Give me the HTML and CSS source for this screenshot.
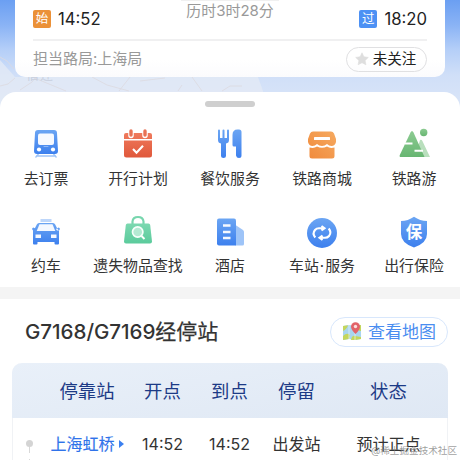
FILE: index.html
```html
<!DOCTYPE html>
<html lang="zh-CN">
<head>
<meta charset="utf-8">
<title>G7168/G7169</title>
<link rel="stylesheet" href="styles.css">
</head>
<body>
<svg class="defs" width="0" height="0" aria-hidden="true">
  <defs>
    <linearGradient id="blue" x1="0" y1="0" x2="0" y2="1"><stop offset="0" stop-color="#6ba5f3"/><stop offset="1" stop-color="#3d80ee"/></linearGradient>
    <linearGradient id="red" x1="0" y1="0" x2="0" y2="1"><stop offset="0" stop-color="#ef7a5c"/><stop offset="1" stop-color="#e0583b"/></linearGradient>
    <linearGradient id="orange" x1="1" y1="0" x2="0" y2="1"><stop offset="0" stop-color="#f6aa60"/><stop offset="1" stop-color="#f08a3c"/></linearGradient>
    <linearGradient id="green" x1="0" y1="0" x2="0" y2="1"><stop offset="0" stop-color="#8ccb92"/><stop offset="1" stop-color="#68b672"/></linearGradient>
    <linearGradient id="mint" x1="0" y1="0" x2="0" y2="1"><stop offset="0" stop-color="#7bd8b0"/><stop offset="1" stop-color="#5bcb9c"/></linearGradient>
  </defs>
</svg>
<div class="screen">
  <header class="hero">
    <svg class="map" viewBox="0 0 460 110" fill="none" aria-hidden="true">
      <path d="M0 60l15 17h243l5 14v19H0z" fill="#e6ebf5" opacity=".7"/>
      <path d="M0 57l7 4 7 8M0 86l8-2 7-6M20 90l12-8 4-5M32 77l34 14M92 77l15 8 22 6M119 91l11-14M178 91l4-6M192 77l10 14M222 91l8-5 12 0M140 81l25-3" stroke="#dcd9e0" stroke-width=".8"/>
      <text class="place" x="26" y="79">宿迁</text>
    </svg>
    <section class="trip">
      <div class="trip-main">
        <div class="stop"><span class="tag tag-start">始</span><span>14:52</span></div>
        <div class="duration">历时3时28分</div>
        <div class="stop stop-end"><span class="tag tag-pass">过</span><span>18:20</span></div>
      </div>
      <div class="trip-foot">
        <span class="bureau">担当路局:上海局</span>
        <span class="follow"><svg width="14" height="14" viewBox="0 0 14 14"><path d="M7 .8l1.9 4 4.4.6-3.2 3 .8 4.4L7 10.7l-3.9 2.1.8-4.4-3.2-3 4.400-.6z" fill="#dedede" stroke="#dedede" stroke-width=".6" stroke-linejoin="round"/></svg>未关注</span>
      </div>
    </section>
  </header>
  <main class="sheet">
    <div class="grip"></div>
    <nav class="services">
      <a class="service"><svg viewBox="0 0 30 30"><path d="M5 27h20M7.500 25l-3 3.500M22.500 25l3 3.500" stroke="#9fc4f7" stroke-width="1.300"/><path d="M7 1h16q3 0 3 3l1 18q0 3-3 3H6q-3 0-3-3L4 4q0-3 3-3z" fill="url(#blue)"/><rect x="7" y="4.500" width="16" height="11.500" rx="2" fill="#f6f9ff"/><rect x="12.500" y="17" width="5" height="1" rx=".5" fill="#8db7f7"/><circle cx="8" cy="20.500" r="2.100" fill="#fff"/><circle cx="22" cy="20.500" r="2.100" fill="#fff"/></svg><span>去订票</span></a>
      <a class="service"><svg viewBox="0 0 30 30"><path d="M3 4h24q2 0 2 2v4H1V6q0-2 2-2zM1 11.500h28V26q0 2.500-2.500 2.500h-23Q1 28.500 1 26z" fill="url(#red)"/><path d="M8 1.500v5M22 1.500v5" stroke="#fff" stroke-width="5.500" stroke-linecap="round"/><path d="M8 2v4M22 2v4" stroke="#e87255" stroke-width="3.400" stroke-linecap="round"/><path d="M10 20l3.500 3.700 6.500-7" fill="none" stroke="#fff" stroke-width="2.100"/></svg><span>开行计划</span></a>
      <a class="service"><svg viewBox="0 0 30 30"><path d="M3 1.500q0-1 1-1t1 1V9h2.500V1.500q0-1 1-1t1 1V9H12V1.500q0-1 1-1t1 1V11q0 3-3 3.500V27q0 2-2.500 2T6 27V14.500Q3 14 3 11zM17.500 16V6q0-5.500 5-5.500H24q2.500 0 2.500 2.500v23.500q0 2.500-2.500 2.500t-3-2.500V17.500h-2q-1.500 0-1.500-1.500z" fill="url(#blue)"/></svg><span>餐饮服务</span></a>
      <a class="service"><svg viewBox="0 0 30 30"><path d="M6 2.500h18q2 0 3 2l2 5.500v3q-1 4-4.500 4-2.500 0-4.500-2-2.200 2-5 2t-5-2q-2 2-4.500 2Q2 17 1 13v-3l2-5.500q1-2 3-2zM2.500 18.500q4.500 1.300 7.500-1 5 2.500 10 0 3 2.300 7.500 1V27q0 2.500-2.500 2.500H5Q2.500 29.500 2.500 27z" fill="url(#orange)"/><rect x="7" y="8" width="16" height="3" rx=".6" fill="#fff"/></svg><span>铁路商城</span></a>
      <a class="service"><svg viewBox="0 0 30 30"><path d="M21 11q1.500-1 2.400 1L31 28H16z" fill="#b9dfbd"/><path d="M.8 26L11.500 3.500q1.500-3 3 0L25.500 28H2Q0 28 .8 26z" fill="url(#green)"/><circle cx="24.700" cy="3.500" r="3.700" fill="url(#green)"/><path d="M6 14.500h7.500M15.500 21.700H24" stroke="#fff" stroke-width="1.900"/></svg><span>铁路游</span></a>
      <a class="service"><svg viewBox="0 0 30 30"><rect x="9.500" y="3" width="11" height="3" fill="#bdd6fa"/><path d="M8 7h14q1.500 0 2.200 1.600L26.500 13l1.500 1.500v13q0 1-1 1h-2.500q-1 0-1-1V26h-17v1.500q0 1-1 1H3q-1 0-1-1v-13L3.500 13l2.300-4.400Q6.500 7 8 7zM2.500 11.500L5 13l-1 1.500H2q-2-2 .5-3zM27.500 11.500L25 13l1 1.500h2q2-2-.5-3z" fill="url(#blue)"/><path d="M8.500 8.200h13L24.300 15H5.700z" fill="#f4f8ff"/><path d="M4.500 18.500h5.500v3.500H4.500zM20 18.500h5.500v3.500H20z" fill="#f4f8ff"/></svg><span>约车</span></a>
      <a class="service"><svg viewBox="0 0 30 30"><path d="M9.500 9V5.500Q10 1 15 1t5.500 4.500V9" fill="none" stroke="#78d6ae" stroke-width="2.200"/><path d="M4.500 7.500h21q1.500 0 1.700 1.500L29 25.500q0 2-2 2H3q-2 0-2-2L2.800 9Q3 7.500 4.500 7.500z" fill="url(#mint)"/><circle cx="14.700" cy="16" r="5.200" fill="#b4ead3" stroke="#f6fffb" stroke-width="1.700"/><path d="M18.500 20l3 3" stroke="#fff" stroke-width="2"/></svg><span>遗失物品查找</span></a>
      <a class="service"><svg viewBox="0 0 30 30"><path d="M20.500 9l7.500 5q1 .8 1 2V28q0 1.500-1.500 1.500h-7z" fill="#9ec4f8"/><path d="M4 2.500h15q2 0 2 2v25H4q-2 0-2-2v-23q0-2 2-2z" fill="url(#blue)"/><path d="M8 9.500h7.500M8 16h7.500M8 22h7.500" stroke="#f5f9ff" stroke-width="2.400"/></svg><span>酒店</span></a>
      <a class="service"><svg viewBox="0 0 30 30"><circle cx="15" cy="17" r="15" fill="url(#blue)"/><path d="M8.300 21.500Q5 17.500 8 14q1.500-1.800 4-1.800h4.500M14.500 10l3 2.200-3 2.300M21.700 12.500Q25 16.500 22 20q-1.500 1.800-4 1.800h-4.500M15.500 19.500l-3 2.300 3 2.200" fill="none" stroke="#fff" stroke-width="2.100"/></svg><span>车站<i class="mid">·</i>服务</span></a>
      <a class="service"><svg viewBox="0 0 30 30"><path d="M15 .8Q21 5 28 5v13q0 9-13 13.500Q2 27 2 18V5Q9 5 15 .8z" fill="url(#blue)"/><text class="shield" x="15" y="22" text-anchor="middle">保</text></svg><span>出行保险</span></a>
    </nav>
    <div class="band"></div>
    <div class="heading">
      <h1>G7168/G7169<b>经停站</b></h1>
      <span class="map-button"><svg width="20" height="20" viewBox="0 0 20 20"><path d="M1 4l6-1 6 1 6-1v14l-6 1-6-1-6 1z" fill="#a9d5ef"/><path d="M1 4l5-.8Q5 7 1 9zM1 14q4-4 7-1l-1 4-6 1zM15 3.700l4-.7v6q-3 0-4-3zM9 18q1-5 4-4l6 1v2l-6 1z" fill="#c4d65c"/><path d="M7 3v14M13 4v14" stroke="#e8f5fa" stroke-width=".7"/><path d="M13.500 12Q9 7.500 9 4.700a4.500 4.500 0 019 0Q18 7.500 13.500 12z" fill="#e26368"/><circle cx="13.500" cy="4.500" r="1.700" fill="#fbdede"/></svg>查看地图</span>
    </div>
    <section class="table">
      <div class="row head"><span></span><span>停靠站</span><span>开点</span><span>到点</span><span>停留</span><span>状态</span></div>
      <div class="row">
        <span class="rail"><i class="dot"></i><i class="stem"></i><i class="stem"></i></span>
        <span class="station">上海虹桥<i class="arrow"></i></span><span>14:52</span><span>14:52</span><span>出发站</span><span>预计正点</span>
      </div>
    </section>
  </main>
  <div class="watermark">@稀土掘金技术社区</div>
</div>
</body>
</html>
```

FILE: styles.css
```css
* { box-sizing: border-box; }
body {
  margin: 0;
  font-family: Inter, "Noto Sans CJK SC", sans-serif;
  color: #333;
}
.defs { display: block; }
.screen {
  position: relative;
  width: 460px;
  height: 460px;
  overflow: hidden;
  background: #fff;
}
.hero {
  position: relative;
  height: 110px;
  padding: 0 15px;
  background: linear-gradient(180deg, #6b9ff2 0, #8ab3f5 25px, #b5cff8 50px, #d0dff8 75px, #d8e4f8 100px);
}
.map {
  position: absolute;
  left: 0;
  top: 0;
  width: 460px;
  height: 110px;
}
.place { font-size: 13px; fill: #c9d0df; letter-spacing: 1px; }
.trip {
  position: relative;
  height: 77px;
  padding: 0 18px;
  border-radius: 0 0 10px 10px;
  background: linear-gradient(#fff 60px, #fbfbfd);
}
.trip-main {
  display: grid;
  grid-template-columns: 1fr auto 1fr;
  height: 41px;
  border-bottom: 2px solid #f0f0f1;
}
.stop {
  display: flex;
  align-items: center;
  gap: 7px;
  height: 38px;
  font-size: 16.700px;
  line-height: 20px;
  color: #222;
}
.stop-end { justify-content: flex-end; }
.tag {
  width: 18px;
  height: 18px;
  border-radius: 2px;
  font-size: 12.500px;
  line-height: 17px;
  text-align: center;
  color: #fff;
}
.tag-start { background: #eb9138; }
.tag-pass { background: #4d91f4; }
.duration {
  padding: 0 5px;
  margin: 0 -5px;
  border-top: 1px solid #f0f0f0;
  font-size: 15px;
  line-height: 19px;
  color: #999;
}
.trip-foot {
  display: flex;
  align-items: center;
  justify-content: space-between;
  height: 36px;
}
.bureau { font-size: 15px; line-height: 20px; color: #999; }
.follow {
  display: flex;
  align-items: center;
  justify-content: center;
  gap: 4px;
  width: 81px;
  height: 25px;
  padding-right: 2px;
  border: 1px solid #e0e0e2;
  border-radius: 13px;
  font-size: 14.500px;
  line-height: 20px;
  color: #222;
}
.sheet {
  position: relative;
  height: 368px;
  margin-top: -18px;
  border-radius: 16px 16px 0 0;
  background: #fff;
}
.grip {
  width: 50px;
  height: 6px;
  margin: 0 auto;
  border-radius: 3px;
  background: #cfcfcf;
  transform: translateY(9px);
}
.services {
  display: grid;
  grid-template-columns: repeat(5, 92px);
  grid-auto-rows: 87px;
  height: 189px;
  padding-top: 31px;
}
.service {
  display: flex;
  flex-direction: column;
  align-items: center;
  gap: 9px;
  font-size: 14.900px;
  line-height: 22px;
  white-space: nowrap;
}
.service svg { width: 30px; height: 30px; overflow: visible; }
.mid { font-style: normal; margin: 0 1px; }
.shield { font-size: 16.500px; font-weight: 700; fill: #fff; }
.band { height: 12px; background: #f4f4f4; }
.heading {
  display: flex;
  align-items: center;
  justify-content: space-between;
  height: 64px;
  padding: 2px 12px 0 25px;
}
h1 {
  margin: 0;
  font-size: 20.600px;
  font-weight: 450;
  line-height: 28px;
  letter-spacing: -.05px;
  white-space: nowrap;
}
h1 b { font-size: 21px; font-weight: 400; -webkit-text-stroke: .25px #333; }
.map-button {
  display: flex;
  align-items: center;
  justify-content: center;
  gap: 6px;
  width: 118px;
  height: 30px;
  border: 1px solid #d8e7fc;
  border-radius: 15px;
  font-size: 17px;
  line-height: 24px;
  color: #4a8df0;
}
.table {
  width: 436px;
  margin: 0 auto;
  border: 1px solid #f0f2f5;
  border-top: 0;
  border-radius: 10px 10px 0 0;
}
.row {
  display: grid;
  grid-template-columns: 32px 84px 67px 67px 67px 117px;
  align-items: center;
  height: 52px;
  font-size: 16px;
  line-height: 24px;
  text-align: center;
}
.head {
  height: 55px;
  margin: 0 -1px;
  padding: 0 1px;
  border-radius: 10px 10px 0 0;
  background: linear-gradient(170deg, #e9f0f9, #dfe8f4);
  font-size: 18.400px;
  color: #1c3a86;
}
.rail {
  display: flex;
  flex-direction: column;
  align-items: center;
  gap: 6px;
  height: 30px;
  margin-top: 22px;
}
.dot { width: 7px; height: 7px; flex: none; border-radius: 50%; background: #d4d4d4; }
.stem { width: 1px; height: 6px; flex: none; background: #d8d8d8; }
.dot + .stem { margin-top: -6px; }
.station {
  display: flex;
  align-items: center;
  justify-content: center;
  gap: 4px;
  color: #2f73ea;
  -webkit-text-stroke: .15px #2f73ea;
}
.arrow {
  border-left: 5px solid #3b80f0;
  border-top: 4.500px solid transparent;
  border-bottom: 4.500px solid transparent;
}
.watermark {
  position: absolute;
  right: 3px;
  bottom: 2px;
  font-size: 9.600px;
  line-height: 14px;
  color: rgba(125, 125, 125, .75);
  white-space: nowrap;
}
```
